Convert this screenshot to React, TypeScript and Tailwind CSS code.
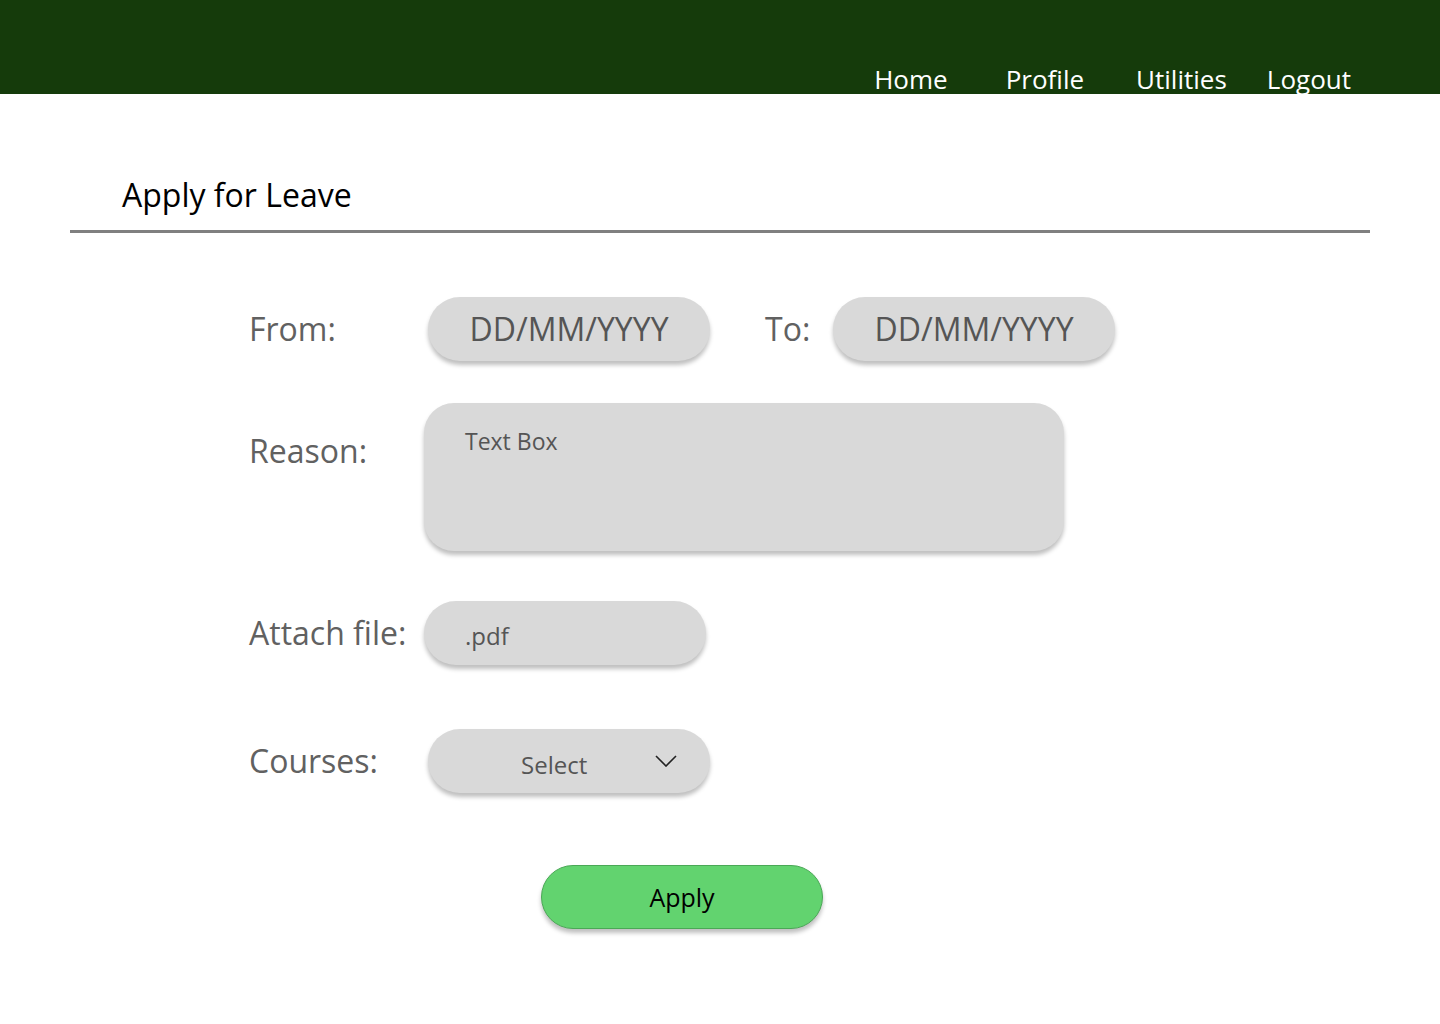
const NAV = [
  { label: "Home", cls: "" },
  { label: "Profile", cls: "ml-[58px]" },
  { label: "Utilities", cls: "ml-[52px]" },
  { label: "Logout", cls: "ml-[40px]" },
];

const pill = "bg-[#d9d9d9] shadow-[0_4px_4px_rgba(0,0,0,0.25)]";

const App = () => {
  return (
    <div className="min-h-screen bg-white font-['Open_Sans',sans-serif]">
      <header className="h-[94px] bg-[#153b0b] flex items-end justify-end pr-[89px]">
        {NAV.map((item) => (
          <a key={item.label} className={`text-white text-[26px] leading-none pb-[2px] ${item.cls}`}>
            {item.label}
          </a>
        ))}
      </header>

      <main className="px-[70px]">
        <h1 className="pt-[85px] pl-[52px] text-[32px] leading-none text-black">Apply for Leave</h1>
        <div className="mt-[19px] h-[3px] bg-[#808080]" />

        <form className="pl-[179px] pt-[64px] text-[#616161]" onSubmit={(e) => e.preventDefault()}>
          {/* dates */}
          <div className="flex items-center">
            <label className="w-[179px] text-[32px] leading-none">From:</label>
            <div className={`${pill} w-[282px] h-[64px] rounded-[32px] flex items-center justify-center`}>
              <span className="text-[32px] leading-none text-[#555] whitespace-nowrap">DD/MM/YYYY</span>
            </div>
            <label className="ml-[55px] w-[68px] text-[32px] leading-none">To:</label>
            <div className={`${pill} w-[282px] h-[64px] rounded-[32px] flex items-center justify-center`}>
              <span className="text-[32px] leading-none text-[#555] whitespace-nowrap">DD/MM/YYYY</span>
            </div>
          </div>

          {/* reason */}
          <div className="mt-[42px] flex items-start">
            <label className="w-[175px] pt-[32px] text-[32px] leading-none">Reason:</label>
            <div className={`${pill} w-[640px] h-[148px] rounded-[30px] pl-[41px] pt-[27px]`}>
              <span className="text-[23px] leading-none text-[#555]">Text Box</span>
            </div>
          </div>

          {/* attachment */}
          <div className="mt-[50px] flex items-center">
            <label className="w-[175px] text-[32px] leading-none whitespace-nowrap">Attach file:</label>
            <div className={`${pill} w-[282px] h-[64px] rounded-[32px] flex items-center pl-[41px] pt-[6px]`}>
              <span className="text-[24px] leading-none text-[#555]">.pdf</span>
            </div>
          </div>

          {/* courses */}
          <div className="mt-[64px] flex items-center">
            <label className="w-[179px] text-[32px] leading-none">Courses:</label>
            <div className={`${pill} w-[282px] h-[64px] rounded-[32px] flex items-center justify-between pl-[93px] pr-[33px]`}>
              <span className="text-[24px] leading-none text-[#555] pt-[8px]">Select</span>
              <svg width="22" height="12" viewBox="0 0 22 12" fill="none" stroke="#222" strokeWidth="1.6">
                <polyline points="1,1 11,11 21,1" />
              </svg>
            </div>
          </div>

          <button
            type="submit"
            className="mt-[72px] ml-[292px] w-[282px] h-[64px] rounded-[32px] bg-[#62d36f] border border-[#4aa856] shadow-[0_4px_4px_rgba(0,0,0,0.25)] text-[25px] leading-none text-black"
          >
            Apply
          </button>
        </form>
      </main>
    </div>
  );
};

export default App;
